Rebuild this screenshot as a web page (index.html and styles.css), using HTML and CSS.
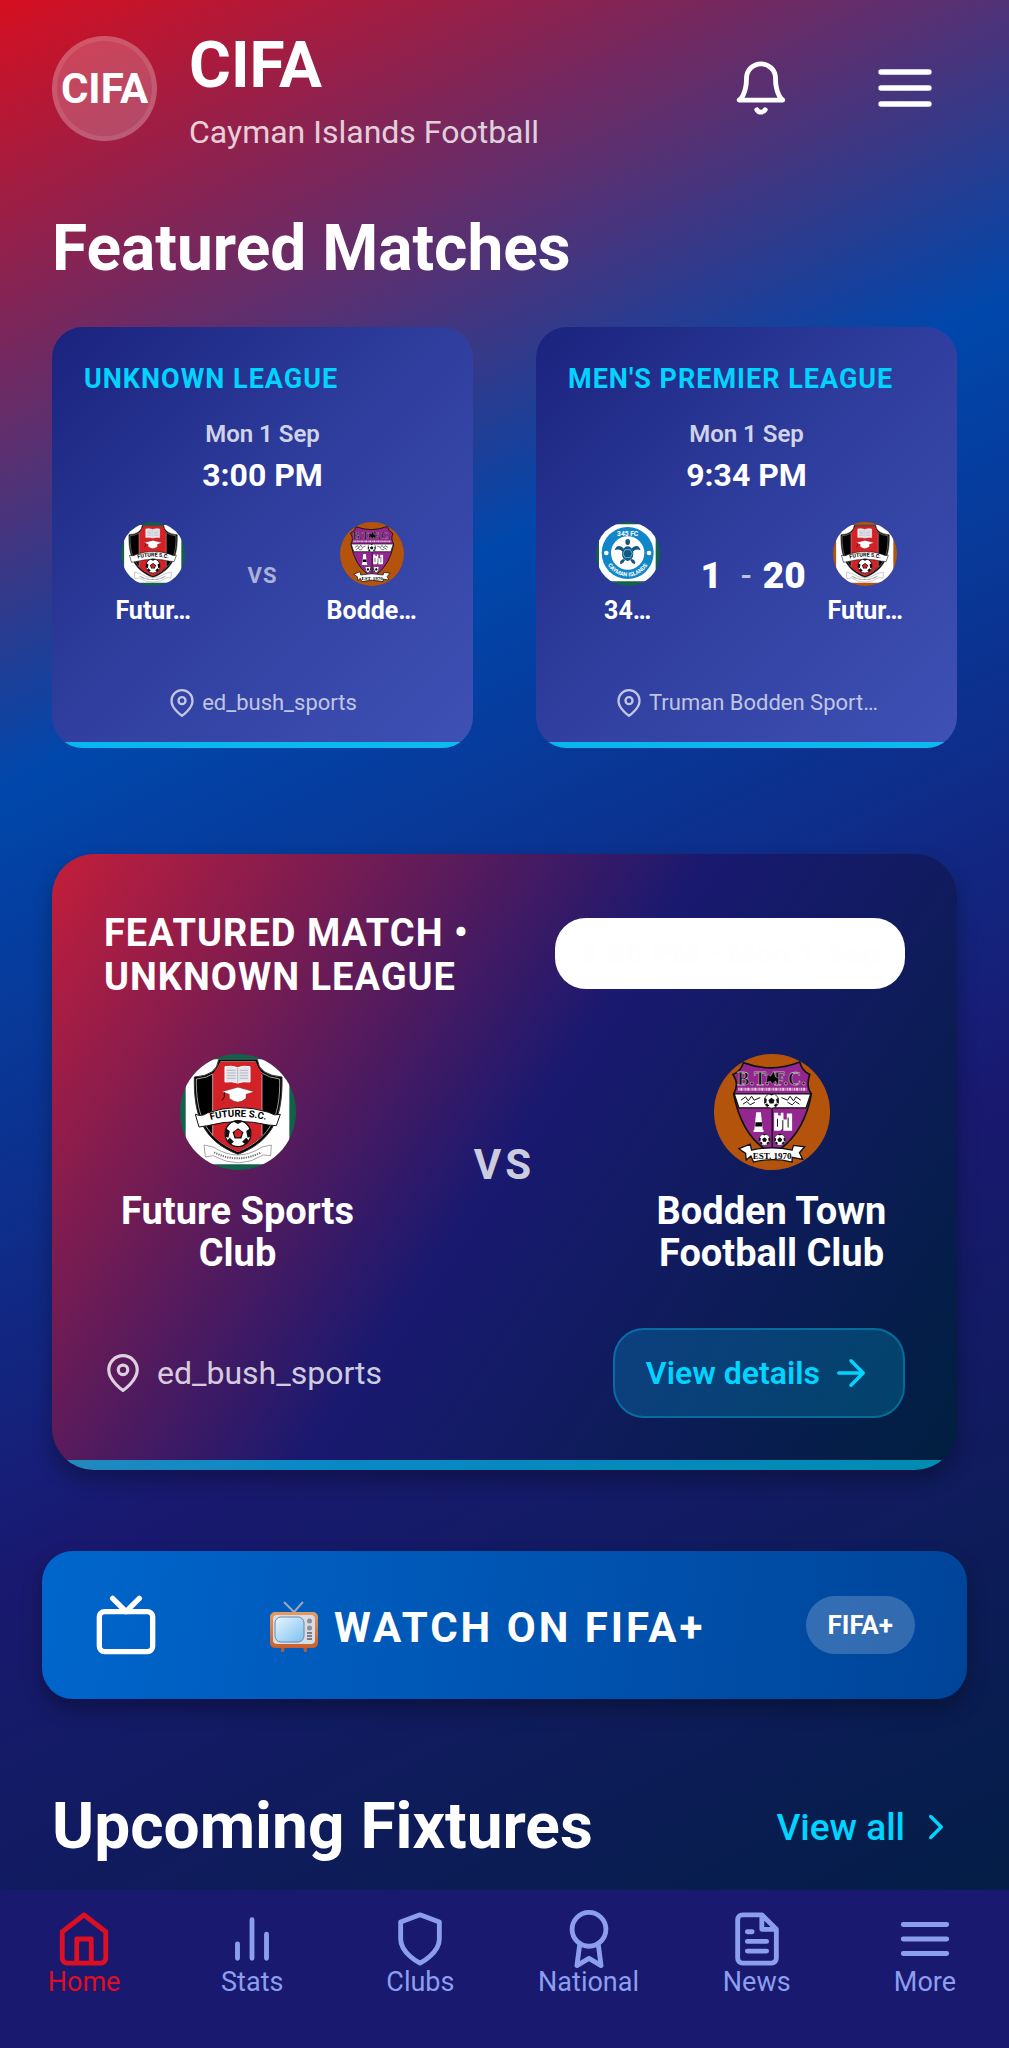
FILE: index.html
```html
<!DOCTYPE html>
<html lang="en">
<head>
<meta charset="utf-8">
<meta name="viewport" content="width=device-width, initial-scale=1">
<title>CIFA – Cayman Islands Football</title>
<link rel="stylesheet" href="styles.css">
</head>
<body>
<svg class="sprite" aria-hidden="true">
  <symbol id="pin" viewBox="0 0 24 24"><path d="M21 10c0 7-9 13-9 13s-9-6-9-13a9 9 0 0 1 18 0z"/><circle cx="12" cy="10" r="3"/></symbol>
  <symbol id="menu" viewBox="0 0 24 24"><path d="M3 12h18M3 6h18M3 18h18"/></symbol>
  <symbol id="ball" viewBox="-10 -10 20 20">
    <circle r="9.5" fill="#fff" stroke="#111" stroke-width="1"/>
    <path fill="#111" d="M0-4 4-1 2.500 3.500h-5L-4-1zM-4-9 0-7l4-2-4-1zM9-4 6-2l1 5 2.500-1zM-9-4l3 2-1 5-2.500-1zM5.500 8 3 6l3-3 2 2zM-5.500 8-3 6l-3-3-2 2z"/>
  </symbol>
</svg>

<div class="app">
  <main class="screen">
    <header class="topbar">
      <div class="logo">CIFA</div>
      <div class="brand">
        <h1 class="heading">CIFA</h1>
        <p class="tagline">Cayman Islands Football</p>
      </div>
      <button class="icon-button" aria-label="Notifications"><svg class="icon icon-58" viewBox="0 0 24 24"><path d="M18 8A6 6 0 0 0 6 8c0 7-3 9-3 9h18s-3-2-3-9M13.730 21a2 2 0 0 1-3.460 0"/></svg></button>
      <button class="icon-button" aria-label="Menu"><svg class="icon icon-64"><use href="#menu"/></svg></button>
    </header>

    <h2 class="heading">Featured Matches</h2>
    <div class="cards">
      <article class="card">
        <h3 class="league">UNKNOWN LEAGUE</h3>
        <p class="date">Mon 1 Sep</p>
        <p class="time">3:00 PM</p>
        <div class="match">
          <div class="team"><span class="crest green"><svg viewBox="62 41 348 348"><use href="#crest-future"/></svg></span><span class="name">Futur…</span></div>
          <span class="vs">VS</span>
          <div class="team"><span class="crest orange"><svg viewBox="39 41 349 349"><use href="#crest-bodden"/></svg></span><span class="name">Bodde…</span></div>
        </div>
        <p class="venue"><svg class="icon icon-28"><use href="#pin"/></svg>ed_bush_sports</p>
      </article>
      <article class="card">
        <h3 class="league">MEN'S PREMIER LEAGUE</h3>
        <p class="date">Mon 1 Sep</p>
        <p class="time">9:34 PM</p>
        <div class="match">
          <div class="team">
            <span class="crest green">
              <svg viewBox="229 605 192 192">
                <path fill="#fff" d="M238 612h170v171H238z"/>
                <circle cx="324" cy="698" r="78" fill="#1186c8"/><circle cx="324" cy="698" r="50" fill="#fff"/>
                <g fill="#15577f"><ellipse cx="324" cy="700" rx="17" ry="22"/><ellipse cx="324" cy="665" rx="7" ry="9"/><path d="M312 684q-20-16-27 6 14-6 24 4zM336 684q20-16 27 6-14-6-24 4zM312 716q-14 4-10 16 10-2 14-12zM336 716q14 4 10 16-10-2-14-12z"/></g>
                <path fill="none" stroke="#4fb4e6" stroke-width="3" d="M316 688h16l6 12-6 12h-16l-6-12z"/>
                <g fill="#fff"><circle cx="260" cy="698" r="7"/><circle cx="388" cy="698" r="7"/></g>
                <text class="crest-text fc345" x="324" y="646">345 FC</text>
                <path id="cayman-arc" fill="none" d="M257 716a69 69 0 0 0 134 0"/>
                <text class="crest-text cayman"><textPath href="#cayman-arc" startOffset="50%">CAYMAN ISLANDS</textPath></text>
              </svg>
            </span>
            <span class="name">34…</span>
          </div>
          <div class="score"><b>1</b><span class="dash">-</span><b>20</b></div>
          <div class="team"><span class="crest orange"><svg viewBox="62 41 348 348"><use href="#crest-future"/></svg></span><span class="name">Futur…</span></div>
        </div>
        <p class="venue"><svg class="icon icon-28"><use href="#pin"/></svg>Truman Bodden Sport…</p>
      </article>
    </div>

    <article class="feature">
      <div class="feature-head">
        <h3 class="feature-title">FEATURED MATCH • UNKNOWN LEAGUE</h3>
        <span class="when">3:00 PM • Mon 1 Sep</span>
      </div>
      <div class="feature-match">
        <div class="feature-team">
          <span class="crest crest-large green">
            <svg viewBox="62 41 348 348">
              <g id="crest-future">
                <path fill="#fff" d="M79 57h311v315H79z"/>
                <path fill="#000" stroke="#333" stroke-width="3" d="M178 58h116q4 46 74 52c2 110-20 190-132 232C126 300 103 220 105 110q68-4 73-52z"/>
                <path fill="none" stroke="#eee" stroke-width="2" d="M184 64h104q6 44 73 52c2 100-20 176-125 218C132 292 110 216 111 116q66-6 73-52z"/>
                <path fill="#d32227" d="M184 64h104l20 38v184q-28 30-72 49-46-20-76-49V102z"/>
                <path fill="none" stroke="#f4dada" stroke-width="2" d="M160 102v184M308 102v184"/>
                <path fill="#e6e7ec" stroke="#fff" stroke-width="3" d="M197 79q20-4 38 3 18-7 37-3v46q-20-3-37 3-18-6-38-3z"/>
                <path fill="none" stroke="#9aa0b4" stroke-width="2" d="M235 82v45M203 90h26M203 98h26M203 106h26M203 114h26M241 90h25M241 98h25M241 106h25M241 114h25"/>
                <path fill="#fff" stroke="#333" stroke-width="1" d="M188 154l48-13 48 13-24 8v12q-24 22-50 0v-12z"/>
                <path fill="none" stroke="#111" stroke-width="3" d="M195 156v14l-7 10"/>
                <path fill="#fff" stroke="#111" stroke-width="3" d="M108 222q20 8 36-4 90-32 184-2 18 12 35 6l-12 34-24-2q-90-22-182 2l-26 4z"/>
                <path id="future-arc" fill="none" d="M142 242q94-26 190 0"/>
                <text class="crest-text future-name"><textPath href="#future-arc" startOffset="50%">FUTURE S.C.</textPath></text>
                <use href="#ball" x="195" y="239" width="82" height="82"/>
                <circle cx="236" cy="280" r="11" fill="#d32227"/>
                <path fill="#fff" stroke="#777" stroke-width="2" d="M134 314l28 6q74 48 146 0l28-6-2 32-22-2q-74 46-150 2l-24 4z"/>
                <path fill="none" stroke="#777" stroke-width="6" stroke-dasharray="4 3" d="M164 336q70 36 142 0"/>
              </g>
            </svg>
          </span>
          <span class="feature-name">Future Sports Club</span>
        </div>
        <span class="feature-vs">VS</span>
        <div class="feature-team">
          <span class="crest crest-large orange">
            <svg viewBox="39 41 349 349">
              <g id="crest-bodden">
                <path fill="#93278f" stroke="#111" stroke-width="5" d="M127 67q84 32 170-2 6 26 30 38-12 36 5 58-20 110-92 165l-26 8-24-8q-70-50-92-165 18-30-2-58 26-12 31-36z"/>
                <path fill="#fff" stroke="#111" stroke-width="4" d="M100 161h230l-14 42H114z"/>
                <path stroke="#111" stroke-width="4" d="M214 203v120"/>
                <text class="crest-text bodden-name" x="212" y="134">B.T. F.C.</text>
                <path stroke="#fff" stroke-width="1" d="M196 128l4-26 10 6 8-16 6 18 10 4-2 20-8-12-10 10-6-10z"/>
                <path fill="none" stroke="#e8cbe6" stroke-width="9" stroke-dasharray="4 2 7 3 3 2" d="M112 147h206"/>
                <use href="#ball" x="189" y="159" width="46" height="46"/>
                <path fill="none" stroke="#111" stroke-width="3" d="M120 180l14-10 8 12 10-14 8 12 18-8M126 192l12-8 10 10 14-8M300 180l-14-10-8 12-10-14-8 12-18-8M296 192l-12-8-10 10-14-8"/>
                <path fill="#fff" d="M166 216h14l6 56h-26z"/><path d="M164 246h19l1 13h-21z"/><path fill="#fff" d="M158 270h30v6h-30zM220 218h12v8h8v-8h8v20h10v-18h16v52h-26l-4-6-6 6h-18z"/>
                <path stroke="#111" stroke-width="3" fill="none" d="M230 236v24M246 240v30M262 232v30"/>
                <use href="#ball" x="173" y="281" width="36" height="36"/><use href="#ball" x="219" y="281" width="36" height="36"/>
                <path fill="#fff" stroke="#111" stroke-width="4" d="M114 326l34-14 4 18q60-14 122 0l4-14 34 4-16 18 10 20-32-6v14q-58-14-116 0l-8-18-14 12-2-20z"/>
                <text class="crest-text est" x="214" y="357">EST. 1970</text>
              </g>
            </svg>
          </span>
          <span class="feature-name">Bodden Town Football Club</span>
        </div>
      </div>
      <div class="feature-foot">
        <p class="feature-venue"><svg class="icon icon-38"><use href="#pin"/></svg>ed_bush_sports</p>
        <button class="details">View details<svg class="icon icon-42" viewBox="0 0 24 24"><path d="M5 12h14M12 5l7 7-7 7"/></svg></button>
      </div>
    </article>

    <a class="watch" href="#watch">
      <svg class="icon icon-64" viewBox="0 0 24 24"><rect x="2" y="7" width="20" height="15" rx="2"/><path d="M17 2l-5 5-5-5"/></svg>
      <span class="watch-label">
        <svg class="tv" viewBox="0 0 48 52" aria-label="TV">
          <defs>
            <linearGradient id="screen" x2="1" y2="1"><stop stop-color="#e8f6ff"/><stop offset="1" stop-color="#7cc0f0"/></linearGradient>
            <linearGradient id="wood" x2="0" y2="1"><stop stop-color="#e59a64"/><stop offset="1" stop-color="#c8602c"/></linearGradient>
          </defs>
          <path d="M14 1l10 10 9-10" fill="none" stroke="#9aa9bd" stroke-width="2"/>
          <path d="M11 44h4l-1 7h-3zM33 44h4v7h-3z" fill="#b9582a"/>
          <rect y="11" width="48" height="36" rx="5" fill="url(#wood)"/>
          <rect x="3" y="14" width="42" height="29" rx="4" fill="#d8dbe2"/>
          <rect x="5" y="16" width="29" height="25" rx="6" fill="url(#screen)" stroke="#6b88a8"/>
          <circle cx="39.500" cy="20" r="2.500" fill="#8b8f9c"/><circle cx="39.500" cy="27" r="2.500" fill="#8b8f9c"/>
          <path d="M37 32h5M37 35h5M37 38h5" stroke="#777c8a" stroke-width="2"/>
        </svg>
        WATCH ON FIFA+
      </span>
      <span class="watch-tag">FIFA+</span>
    </a>

    <div class="section-head">
      <h2 class="heading">Upcoming Fixtures</h2>
      <a class="view-all" href="#fixtures">View all<svg class="icon icon-42" viewBox="0 0 24 24"><path d="M9 18l6-6-6-6"/></svg></a>
    </div>
  </main>

  <nav class="tabs">
    <a class="tab active" href="#home"><svg class="icon icon-58" viewBox="0 0 24 24"><path d="M3 9l9-7 9 7v11a2 2 0 0 1-2 2H5a2 2 0 0 1-2-2zM9 22V12h6v10"/></svg>Home</a>
    <a class="tab" href="#stats"><svg class="icon icon-58" viewBox="0 0 24 24"><path d="M18 20V10M12 20V4M6 20v-6"/></svg>Stats</a>
    <a class="tab" href="#clubs"><svg class="icon icon-58" viewBox="0 0 24 24"><path d="M12 22s8-4 8-10V5l-8-3-8 3v7c0 6 8 10 8 10z"/></svg>Clubs</a>
    <a class="tab" href="#national"><svg class="icon icon-58" viewBox="0 0 24 24"><circle cx="12" cy="8" r="7"/><path d="M8.210 13.890L7 23l5-3 5 3-1.210-9.120"/></svg>National</a>
    <a class="tab" href="#news"><svg class="icon icon-58" viewBox="0 0 24 24"><path d="M14 2H6a2 2 0 0 0-2 2v16a2 2 0 0 0 2 2h12a2 2 0 0 0 2-2V8zM14 2v6h6M16 13H8M16 17H8M10 9H8"/></svg>News</a>
    <a class="tab" href="#more"><svg class="icon icon-58"><use href="#menu"/></svg>More</a>
  </nav>
</div>
</body>
</html>
```
FILE: styles.css
```css
* { box-sizing: border-box; margin: 0; padding: 0; }
body { font-family: Roboto, "Liberation Sans", sans-serif; color: #fff; background: #191970; }
a { color: inherit; text-decoration: none; }
button { font: inherit; color: inherit; background: none; border: 0; cursor: pointer; }
.sprite { position: absolute; width: 0; height: 0; }

.icon { flex: none; display: block; fill: none; stroke: currentColor; stroke-width: 2; stroke-linecap: round; stroke-linejoin: round; }
.icon-28 { width: 28px; height: 28px; }
.icon-38 { width: 38px; height: 38px; }
.icon-42 { width: 42px; height: 42px; }
.icon-58 { width: 58px; height: 58px; }
.icon-64 { width: 64px; height: 64px; }

.app { min-height: 100vh; display: flex; flex-direction: column; background: linear-gradient(154deg, #d60f20 0%, #0047ab 31%, #191970 62%, #001f3f 100%); }
.screen { flex: 1; padding: 22px 52px 24px; }

.topbar { display: flex; align-items: center; margin-bottom: 57px; }
.logo { flex: none; width: 105px; height: 105px; border-radius: 50%; border: 5px solid rgba(255, 255, 255, .1); background: rgba(255, 255, 255, .2); display: flex; align-items: center; justify-content: center; font-size: 42px; font-weight: 700; }
.brand { flex: 1; margin-left: 32px; }
.heading { font-size: 64px; line-height: 76px; font-weight: 700; }
.brand .heading { line-height: 88px; }
.tagline { font-size: 32px; line-height: 44px; color: rgba(255, 255, 255, .8); }
.icon-button { padding: 20px; }
.icon-button + .icon-button { margin-left: 43px; }

.cards { display: grid; grid-template-columns: 1fr 1fr; gap: 63px; margin: 40px 0 106px; }
.card { position: relative; overflow: hidden; aspect-ratio: 1; border-radius: 31px; padding: 33px 32px 28px; display: flex; flex-direction: column; background: linear-gradient(135deg, #1a237e, #303f9f 50%, #3f51b5); }
.card::after { content: ""; position: absolute; inset: auto 0 0; height: 6px; background: #00d4ff; opacity: .8; }
.league { font-size: 27px; line-height: 38px; font-weight: 700; letter-spacing: 1px; color: #00d4ff; white-space: nowrap; }
.date { margin-top: 18px; font-size: 24px; line-height: 36px; font-weight: 600; text-align: center; color: rgba(255, 255, 255, .8); }
.time { margin-top: 2px; font-size: 32px; line-height: 42px; font-weight: 700; text-align: center; }
.match { margin-top: 26px; display: grid; grid-template-columns: 1fr auto 1fr; align-items: center; }
.team { display: flex; flex-direction: column; align-items: center; gap: 8px; }
.crest { flex: none; width: 64px; height: 64px; border-radius: 50%; overflow: hidden; }
.crest svg { display: block; width: 100%; height: 100%; }
.crest-large { width: 116px; height: 116px; }
.green { background: #11614b; }
.orange { background: #b4540c; }
.name { font-size: 25px; line-height: 34px; font-weight: 700; }
.vs { padding: 0 25px; font-size: 22px; font-weight: 700; letter-spacing: 1px; color: rgba(255, 255, 255, .6); }
.score { display: flex; align-items: center; gap: 11px; font-size: 37px; font-weight: 700; }
.score b:first-child { padding: 0 8px 0 13px; }
.dash { font-size: 32px; font-weight: 500; color: rgba(255, 255, 255, .7); }
.venue { margin-top: auto; display: flex; align-items: center; justify-content: center; gap: 6px; font-size: 22px; line-height: 34px; color: rgba(255, 255, 255, .7); }

.feature { position: relative; overflow: hidden; padding: 57px 52px 52px; border-radius: 42px; background: linear-gradient(124deg, #c41e3a, #191970 50%, #001f3f); box-shadow: 0 10px 20px rgba(0, 0, 0, .3); }
.feature::after { content: ""; position: absolute; inset: auto 0 0; height: 10px; background: #00d4ff; opacity: .6; }
.feature-head { display: flex; align-items: flex-start; justify-content: space-between; }
.feature-title { width: 400px; font-size: 38px; line-height: 44px; font-weight: 700; letter-spacing: 1px; }
.when { margin-top: 7px; padding: 16px 24px; border-radius: 31px; background: #fff; color: #fefefe; font-size: 30px; line-height: 39px; font-weight: 700; letter-spacing: 1px; white-space: nowrap; }
.feature-match { margin: 55px 0 54px; display: grid; grid-template-columns: 1fr 1fr 1fr; align-items: center; justify-items: center; }
.feature-team { display: flex; flex-direction: column; align-items: center; gap: 20px; padding: 0 10px; text-align: center; }
.feature-name { font-size: 38px; line-height: 42px; font-weight: 700; }
.feature-vs { font-size: 42px; font-weight: 700; letter-spacing: 4px; color: rgba(255, 255, 255, .8); }
.feature-foot { display: flex; align-items: center; justify-content: space-between; }
.feature-venue { display: flex; align-items: center; gap: 15px; font-size: 32px; color: rgba(255, 255, 255, .8); }
.details { display: flex; align-items: center; gap: 10px; height: 90px; padding: 0 31px; border: 2px solid rgba(0, 212, 255, .3); border-radius: 31px; background: rgba(0, 212, 255, .2); color: #00d4ff; font-size: 32px; font-weight: 600; }

.watch { margin: 81px -10px 90px; height: 148px; padding: 0 52px; border-radius: 31px; display: flex; align-items: center; justify-content: space-between; background: linear-gradient(99deg, #0066cc, #004499); box-shadow: 0 10px 20px rgba(0, 0, 0, .3); }
.watch-label { display: flex; align-items: center; gap: 16px; padding: 4px 0 0 12px; font-size: 42px; font-weight: 700; letter-spacing: 3px; }
.tv { width: 48px; height: 52px; }
.watch-tag { padding: 0 22px; border-radius: 29px; background: rgba(255, 255, 255, .2); font-size: 26px; line-height: 58px; font-weight: 700; }

.section-head { display: flex; align-items: center; justify-content: space-between; }
.view-all { display: flex; align-items: center; gap: 10px; font-size: 37px; font-weight: 500; color: #00d4ff; }

.tabs { position: sticky; bottom: 0; display: grid; grid-template-columns: repeat(6, 1fr); padding: 20px 0 52px; background: #191970; color: #8c9eee; }
.tab { display: flex; flex-direction: column; align-items: center; font-size: 27px; line-height: 28px; }
.active { color: #dc1022; }

.crest-text { font-weight: 700; }
.future-name { font-size: 29px; text-anchor: middle; }
.bodden-name { font-family: "Liberation Serif", serif; font-size: 55px; text-anchor: middle; fill: #111; stroke: #fff; stroke-width: 1px; }
.est { font-family: "Liberation Serif", serif; font-size: 27px; text-anchor: middle; }
.fc345 { font-size: 20px; text-anchor: middle; fill: #fff; }
.cayman { font-size: 17px; text-anchor: middle; fill: #fff; }
```
